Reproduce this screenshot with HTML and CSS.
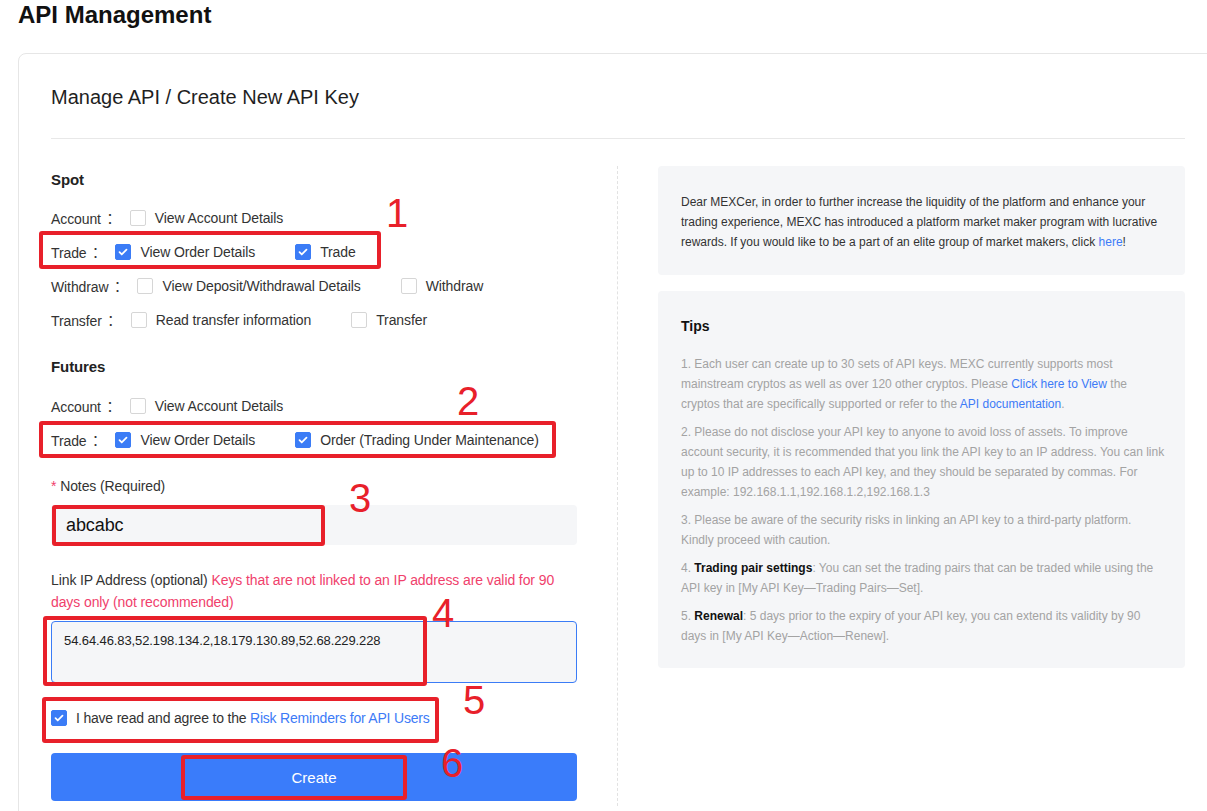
FILE: index.html
```html
<!DOCTYPE html>
<html lang="en">
<head>
    <meta charset="UTF-8">
    <meta name="viewport" content="width=device-width, initial-scale=1.0">
    <title>API Management</title>
    <link rel="stylesheet" href="styles.css">
</head>
<body>
    <div class="page">
        <h1 class="page-title">API Management</h1>

        <div class="card">
            <div class="card-header">Manage API / Create New API Key</div>

            <div class="card-body">
                <!-- 左侧表单 -->
                <div class="form-col">
                    <div class="section-title">Spot</div>
                    <div class="perm-row">
                        <span class="perm-label">Account<i class="colon">：</i></span>
                        <label class="opt"><span class="cb"></span>View Account Details</label>
                    </div>
                    <div class="perm-row">
                        <span class="perm-label">Trade<i class="colon">：</i></span>
                        <label class="opt"><span class="cb checked"><svg viewBox="0 0 16 16"><path d="M4 8.2l2.6 2.6L12 5.4" /></svg></span>View Order Details</label>
                        <label class="opt"><span class="cb checked"><svg viewBox="0 0 16 16"><path d="M4 8.2l2.6 2.6L12 5.4" /></svg></span>Trade</label>
                    </div>
                    <div class="perm-row">
                        <span class="perm-label">Withdraw<i class="colon">：</i></span>
                        <label class="opt"><span class="cb"></span>View Deposit/Withdrawal Details</label>
                        <label class="opt"><span class="cb"></span>Withdraw</label>
                    </div>
                    <div class="perm-row">
                        <span class="perm-label">Transfer<i class="colon">：</i></span>
                        <label class="opt"><span class="cb"></span>Read transfer information</label>
                        <label class="opt"><span class="cb"></span>Transfer</label>
                    </div>

                    <div class="section-title futures">Futures</div>
                    <div class="perm-row">
                        <span class="perm-label">Account<i class="colon">：</i></span>
                        <label class="opt"><span class="cb"></span>View Account Details</label>
                    </div>
                    <div class="perm-row">
                        <span class="perm-label">Trade<i class="colon">：</i></span>
                        <label class="opt"><span class="cb checked"><svg viewBox="0 0 16 16"><path d="M4 8.2l2.6 2.6L12 5.4" /></svg></span>View Order Details</label>
                        <label class="opt"><span class="cb checked"><svg viewBox="0 0 16 16"><path d="M4 8.2l2.6 2.6L12 5.4" /></svg></span>Order (Trading Under Maintenance)</label>
                    </div>

                    <div class="field-label"><span class="req">*</span> Notes (Required)</div>
                    <div class="text-input">abcabc</div>

                    <div class="field-label ip-label">Link IP Address (optional) <span class="warn">Keys that are not linked to an IP address are valid for 90 days only (not recommended)</span></div>
                    <div class="textarea">54.64.46.83,52.198.134.2,18.179.130.89,52.68.229.228</div>

                    <div class="agree">
                        <span class="cb checked"><svg viewBox="0 0 16 16"><path d="M4 8.2l2.6 2.6L12 5.4" /></svg></span>
                        <span>I have read and agree to the <a class="link">Risk Reminders for API Users</a></span>
                    </div>

                    <button class="create-btn">Create</button>
                </div>

                <div class="col-divider"></div>

                <!-- 右侧说明 -->
                <div class="info-col">
                    <div class="info-box notice">
                        Dear MEXCer, in order to further increase the liquidity of the platform and enhance your trading experience, MEXC has introduced a platform market maker program with lucrative rewards. If you would like to be a part of an elite group of market makers, click <a class="link">here</a>!
                    </div>
                    <div class="info-box tips">
                        <div class="tips-title">Tips</div>
                        <p>1. Each user can create up to 30 sets of API keys. MEXC currently supports most mainstream cryptos as well as over 120 other cryptos. Please <a class="link">Click here to View</a> the cryptos that are specifically supported or refer to the <a class="link">API documentation</a>.</p>
                        <p>2. Please do not disclose your API key to anyone to avoid loss of assets. To improve account security, it is recommended that you link the API key to an IP address. You can link up to 10 IP addresses to each API key, and they should be separated by commas. For example: 192.168.1.1,192.168.1.2,192.168.1.3</p>
                        <p>3. Please be aware of the security risks in linking an API key to a third-party platform. Kindly proceed with caution.</p>
                        <p>4. <b>Trading pair settings</b>: You can set the trading pairs that can be traded while using the API key in [My API Key—Trading Pairs—Set].</p>
                        <p>5. <b>Renewal</b>: 5 days prior to the expiry of your API key, you can extend its validity by 90 days in [My API Key—Action—Renew].</p>
                    </div>
                </div>
            </div>
        </div>

        <!-- 截图上的红色标注 -->
        <div class="mark" style="left:39px;top:231px;width:342px;height:38px"></div>
        <div class="mark-num" style="left:386px;top:190px">1</div>
        <div class="mark" style="left:39px;top:421px;width:517px;height:37px"></div>
        <div class="mark-num" style="left:457px;top:378px">2</div>
        <div class="mark" style="left:52px;top:505px;width:273px;height:41px"></div>
        <div class="mark-num" style="left:349px;top:475px">3</div>
        <div class="mark" style="left:43px;top:616px;width:384px;height:70px"></div>
        <div class="mark-num" style="left:432px;top:590px">4</div>
        <div class="mark" style="left:42px;top:697px;width:397px;height:46px"></div>
        <div class="mark-num" style="left:463px;top:677px">5</div>
        <div class="mark" style="left:181px;top:755px;width:226px;height:45px"></div>
        <div class="mark-num" style="left:441px;top:740px">6</div>
    </div>
</body>
</html>
```

FILE: styles.css
```css
* { margin: 0; padding: 0; box-sizing: border-box; font-family: 'Liberation Sans', Arial, 'Noto Sans CJK SC', sans-serif; }
body { background: #fff; color: #333; overflow: hidden; }
.page { position: relative; width: 1207px; height: 811px; overflow: hidden; }
.page-title { font-size: 24px; font-weight: bold; line-height: 30px; color: #111; padding-left: 18px; }
.card { margin: 23px 0 0 18px; width: 1200px; border: 1px solid #e6e6e6; border-radius: 8px; padding: 0 32px 60px; }
.card-header { font-size: 20px; line-height: 26px; color: #1f1f1f; padding: 30px 0 28px; border-bottom: 1px solid #e8e8e8; }
.card-body { display: grid; grid-template-columns: 526px 1px 527px; column-gap: 40px; padding-top: 27px; }
.col-divider { border-left: 1px dashed #e2e2e2; height: 640px; }

.form-col { letter-spacing: -0.1px; }
.section-title { font-size: 15px; font-weight: 600; line-height: 22px; color: #222; margin: 3px 0 10px; }
.section-title.futures { margin: 19px 0 11px; }
.perm-row { display: flex; align-items: center; height: 34px; font-size: 14px; color: #333; }
.perm-label { margin-right: 13px; white-space: nowrap; }
.colon { font-style: normal; font-family: 'Noto Sans CJK TC', sans-serif; margin-left: 2px; }
.opt { display: flex; align-items: center; margin-right: 40px; white-space: nowrap; }
.cb { display: inline-flex; width: 16px; height: 16px; border: 1px solid #d6d6d6; border-radius: 2px; background: #fff; margin-right: 9px; flex-shrink: 0; }
.cb.checked { background: #3b7cf6; border-color: #3b7cf6; }
.cb svg { width: 14px; height: 14px; fill: none; stroke: #fff; stroke-width: 2; stroke-linecap: round; stroke-linejoin: round; }

.field-label { font-size: 14px; line-height: 22px; color: #333; margin-top: 18px; }
.req { color: #f0416c; }
.warn { color: #f0416c; }
.ip-label { margin-top: 24px; }
.text-input { margin-top: 8px; height: 40px; background: #f5f6f8; border-radius: 4px; padding-left: 15px; font-size: 18px; line-height: 40px; color: #111; }
.textarea { margin-top: 8px; height: 62px; background: #f5f6f8; border: 1px solid #3b7cf6; border-radius: 4px; padding: 10px 12px; font-size: 13px; line-height: 18px; color: #222; }
.agree { display: flex; align-items: center; margin-top: 24px; height: 22px; font-size: 14px; color: #333; letter-spacing: -0.2px; }
.link { color: #3d7bf7; text-decoration: none; cursor: pointer; }
.create-btn { display: block; width: 100%; height: 48px; margin-top: 24px; border: none; border-radius: 4px; background: #3a7cfa; color: #fff; font-size: 15px; cursor: pointer; }

.info-box { background: #f5f6f8; border-radius: 4px; font-size: 12px; line-height: 20px; }
.notice { padding: 26px 20px 23px 23px; color: #333; }
.tips { margin-top: 16px; padding: 24px 18px 22px 23px; color: #a3a3a3; }
.tips-title { font-size: 14px; font-weight: 600; line-height: 22px; color: #111; margin-bottom: 17px; }
.tips p { margin-bottom: 8px; }
.tips p:last-child { margin-bottom: 0; }
.tips b { color: #111; }

/* 标注 */
.mark { position: absolute; border: 4px solid #e8202a; border-radius: 3px; }
.mark-num { position: absolute; font-size: 40px; line-height: 46px; color: #e8202a; }
```
